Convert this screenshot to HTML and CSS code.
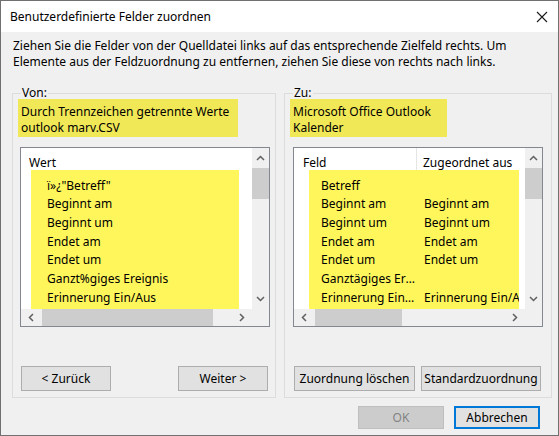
FILE: index.html
```html
<!DOCTYPE html>
<html lang="de">
<head>
<meta charset="utf-8">
<title>Benutzerdefinierte Felder zuordnen</title>
<link rel="stylesheet" href="styles.css">
</head>
<body>
<div class="window">
  <div class="titlebar">
    <span class="title">Benutzerdefinierte Felder zuordnen</span>
    <svg class="close" width="12" height="12" viewBox="0 0 12 12"><path d="M1 1L11 11M11 1L1 11" stroke="#1a1a1a" stroke-width="1.1" fill="none"/></svg>
  </div>
  <div class="content">
    <p class="intro">Ziehen Sie die Felder von der Quelldatei links auf das entsprechende Zielfeld rechts. Um<br>Elemente aus der Feldzuordnung zu entfernen, ziehen Sie diese von rechts nach links.</p>
    <div class="groups">
      <fieldset class="group group-left">
        <legend>Von:</legend>
        <div class="hl-label label-left">Durch Trennzeichen getrennte Werte<br>outlook marv.CSV</div>
        <div class="listbox list-left">
          <div class="lv">
            <div class="lv-head"><span class="hcell hcell-wert">Wert</span></div>
            <div class="lv-body body-left">
              <div class="row">ï»¿"Betreff"</div>
              <div class="row">Beginnt am</div>
              <div class="row">Beginnt um</div>
              <div class="row">Endet am</div>
              <div class="row">Endet um</div>
              <div class="row">Ganzt%giges Ereignis</div>
              <div class="row">Erinnerung Ein/Aus</div>
            </div>
          </div>
          <div class="vscroll">
            <div class="sbtn"><svg width="9" height="6" viewBox="0 0 9 6"><path d="M1 5L4.5 1.5L8 5" stroke="#606060" stroke-width="1.5" fill="none"/></svg></div>
            <div class="vthumb"></div>
            <div class="track"></div>
            <div class="sbtn"><svg width="9" height="6" viewBox="0 0 9 6"><path d="M1 1L4.5 4.5L8 1" stroke="#606060" stroke-width="1.5" fill="none"/></svg></div>
          </div>
          <div class="hscroll">
            <div class="sbtn hbtn"><svg width="6" height="9" viewBox="0 0 6 9"><path d="M5 1L1.5 4.5L5 8" stroke="#606060" stroke-width="1.5" fill="none"/></svg></div>
            <div class="hthumb hthumb-left"></div>
            <div class="track"></div>
            <div class="sbtn hbtn"><svg width="6" height="9" viewBox="0 0 6 9"><path d="M1 1L4.5 4.5L1 8" stroke="#606060" stroke-width="1.5" fill="none"/></svg></div>
          </div>
          <div class="corner"></div>
        </div>
        <div class="btnrow btnrow-left">
          <button class="btn btn-nav">&lt; Zurück</button>
          <button class="btn btn-nav">Weiter &gt;</button>
        </div>
      </fieldset>

      <fieldset class="group group-right">
        <legend>Zu:</legend>
        <div class="hl-label label-right">Microsoft Office Outlook<br>Kalender</div>
        <div class="listbox list-right">
          <div class="lv">
            <div class="lv-head"><span class="hcell hcell-feld">Feld</span><span class="hcell hcell-zu">Zugeordnet aus</span></div>
            <div class="lv-body body-right">
              <div class="row2"><span class="c1">Betreff</span><span class="c2"></span></div>
              <div class="row2"><span class="c1">Beginnt am</span><span class="c2">Beginnt am</span></div>
              <div class="row2"><span class="c1">Beginnt um</span><span class="c2">Beginnt um</span></div>
              <div class="row2"><span class="c1">Endet am</span><span class="c2">Endet am</span></div>
              <div class="row2"><span class="c1">Endet um</span><span class="c2">Endet um</span></div>
              <div class="row2"><span class="c1">Ganztägiges Ereignis</span><span class="c2"></span></div>
              <div class="row2"><span class="c1">Erinnerung Ein/Aus</span><span class="c2">Erinnerung Ein/Aus</span></div>
            </div>
          </div>
          <div class="vscroll">
            <div class="sbtn"><svg width="9" height="6" viewBox="0 0 9 6"><path d="M1 5L4.5 1.5L8 5" stroke="#606060" stroke-width="1.5" fill="none"/></svg></div>
            <div class="vthumb"></div>
            <div class="track"></div>
            <div class="sbtn"><svg width="9" height="6" viewBox="0 0 9 6"><path d="M1 1L4.5 4.5L8 1" stroke="#606060" stroke-width="1.5" fill="none"/></svg></div>
          </div>
          <div class="hscroll">
            <div class="sbtn hbtn"><svg width="6" height="9" viewBox="0 0 6 9"><path d="M5 1L1.5 4.5L5 8" stroke="#606060" stroke-width="1.5" fill="none"/></svg></div>
            <div class="hthumb hthumb-right"></div>
            <div class="track"></div>
            <div class="sbtn hbtn"><svg width="6" height="9" viewBox="0 0 6 9"><path d="M1 1L4.5 4.5L1 8" stroke="#606060" stroke-width="1.5" fill="none"/></svg></div>
          </div>
          <div class="corner"></div>
        </div>
        <div class="btnrow btnrow-right">
          <button class="btn btn-clear">Zuordnung löschen</button>
          <button class="btn btn-default-map">Standardzuordnung</button>
        </div>
      </fieldset>
    </div>
    <div class="footer">
      <button class="btn btn-ok" disabled>OK</button>
      <button class="btn btn-cancel">Abbrechen</button>
    </div>
  </div>
</div>
</body>
</html>
```

FILE: styles.css
```css
* { box-sizing: border-box; }

html, body {
  margin: 0;
  padding: 0;
  background: #f0f0f0;
}

body {
  font-family: "Segoe UI", "Noto Sans", "Open Sans", sans-serif;
  font-size: 12px;
  color: #000;
}

.window {
  width: 559px;
  height: 436px;
  border: 1px solid #707070;
  background: #f0f0f0;
  overflow: hidden;
  display: flex;
  flex-direction: column;
}

.titlebar {
  height: 31px;
  flex: none;
  background: #fff;
  display: flex;
  align-items: center;
  justify-content: space-between;
  padding: 0 10px 0 9px;
}

.title {
  line-height: 16px;
}

.close {
  display: block;
  margin-top: 1px;
}

.content {
  flex: 1;
  padding: 6px 0 0 11px;
}

.intro {
  margin: 0;
  padding-left: 1px;
  line-height: 16px;
  white-space: nowrap;
}

.groups {
  display: flex;
  gap: 8px;
  margin-top: 17px;
}

.group {
  margin: 0;
  border: 1px solid #dcdcdc;
  padding: 0 5px 6px 5px;
  min-width: 0;
}

.group legend {
  margin-left: 3px;
  padding: 0 1px;
  line-height: 12px;
  font-size: 12px;
}

.group-left { width: 264px; }
.group-right { width: 268px; }

.hl-label {
  background: #f1e857;
  line-height: 16px;
  padding: 5px 0 1px 3px;
  height: 38px;
  white-space: nowrap;
}

.label-left { width: 220px; }
.label-right { width: 157px; }

.listbox {
  margin-top: 10px;
  width: 250px;
  height: 180px;
  border: 1px solid #828790;
  background: #fff;
  display: grid;
  grid-template-columns: 1fr 17px;
  grid-template-rows: 1fr 17px;
}

.list-left { margin-left: 2px; }
.list-right { margin-left: 3px; }

.lv {
  overflow: hidden;
  display: flex;
  flex-direction: column;
}

.lv-head {
  height: 22px;
  flex: none;
  display: flex;
}

.hcell {
  line-height: 16px;
  padding-top: 7px;
  white-space: nowrap;
}

.hcell-wert { padding-left: 8px; }

.hcell-feld {
  width: 123px;
  padding-left: 9px;
  border-right: 1px solid #e5e5e5;
  height: 22px;
}

.hcell-zu { padding-left: 6px; }

.lv-body {
  flex: 1;
  background: #fff65b;
  padding-top: 6.5px;
  overflow: hidden;
}

.body-left {
  margin-left: 10px;
  width: 208px;
}

.body-right {
  margin-left: 15px;
  width: 210px;
}

.row {
  line-height: 18.7px;
  padding-left: 16px;
  white-space: nowrap;
}

.row2 {
  line-height: 18.7px;
  padding-left: 12px;
  display: flex;
  white-space: nowrap;
}

.c1 {
  width: 97px;
  margin-right: 6px;
  overflow: hidden;
  text-overflow: ellipsis;
  flex: none;
}

.c2 {
  flex: none;
}

.vscroll {
  background: #f0f0f0;
  display: flex;
  flex-direction: column;
}

.hscroll {
  background: #f0f0f0;
  display: flex;
}

.sbtn {
  flex: none;
  height: 20px;
  display: flex;
  align-items: center;
  justify-content: center;
}

.sbtn svg { display: block; }

.hbtn {
  height: auto;
  width: 20px;
}

.vthumb {
  height: 31px;
  flex: none;
  background: #cdcdcd;
}

.track { flex: 1; }

.hthumb {
  flex: none;
  background: #cdcdcd;
  margin-left: 1px;
}

.hthumb-left { width: 171px; }
.hthumb-right { width: 87px; }

.corner { background: #f0f0f0; }

.btnrow {
  display: flex;
  margin-top: 39px;
}

.btnrow-left {
  justify-content: space-between;
  margin-left: 3px;
  width: 247px;
}

.btnrow-right {
  margin-left: 4px;
  gap: 6px;
}

.btn {
  font-family: inherit;
  font-size: 12px;
  color: #000;
  background: #e1e1e1;
  border: 1px solid #adadad;
  border-radius: 0;
  padding: 0;
  margin: 0;
  line-height: 16px;
  white-space: nowrap;
}

.btn-nav {
  width: 90px;
  height: 25px;
}

.btn-clear {
  width: 121px;
  height: 25px;
}

.btn-default-map {
  width: 120px;
  height: 25px;
}

.footer {
  display: flex;
  justify-content: flex-end;
  gap: 10px;
  margin-top: 8px;
  padding-right: 18px;
}

.btn-ok {
  width: 86px;
  height: 23px;
  background: #cccccc;
  border-color: #bfbfbf;
  color: #838383;
}

.btn-cancel {
  width: 86px;
  height: 23px;
  border: 2px solid #0078d7;
}
```
